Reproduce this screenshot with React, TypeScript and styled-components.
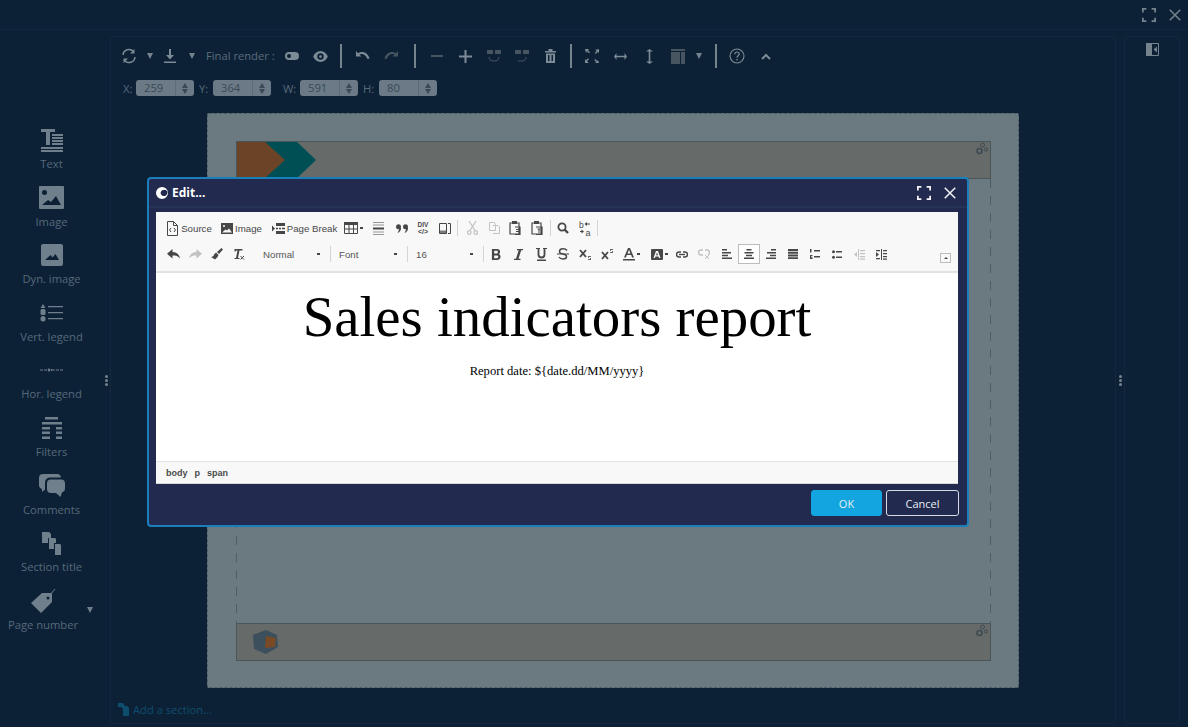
import React from "react";
import styled, { createGlobalStyle } from "styled-components";

const GlobalStyle = createGlobalStyle`
  html, body { margin: 0; padding: 0; height: 100%; background: #0d2136; overflow: hidden; }
  body { font-family: "Open Sans", "Noto Sans", sans-serif; }
  #root { height: 100%; }
`;

const Shell = styled.div`
  position: relative;
  display: flex;
  flex-direction: column;
  width: 1188px;
  height: 727px;
  background: #0d2136;
  color: #6f7f8b;
`;

const TopBar = styled.div`
  height: 29px;
  flex: none;
  display: flex;
  justify-content: flex-end;
  align-items: center;
  gap: 12px;
  padding-right: 6px;
  border-bottom: 1px solid #13283e;
`;

const TopIcon = styled.div`
  width: 14px;
  height: 14px;
  color: #75838e;
  display: flex;
`;

const Body = styled.div`
  flex: 1;
  display: flex;
  padding: 6px 8px 3px 0;
  min-height: 0;
`;

const Sidebar = styled.div`
  width: 103px;
  flex: none;
  padding-top: 89px;
`;

const PaletteItem = styled.div<{ $shift?: number }>`
  height: 57.6px;
  position: relative;
  display: flex;
  flex-direction: column;
  align-items: center;
  padding-right: ${(p) => p.$shift ?? 0}px;
  color: #6f7f8b;
`;

const PaletteIcon = styled.div`
  height: 30px;
  display: flex;
  align-items: center;
  justify-content: center;
`;

const PaletteLabel = styled.div`
  font-size: 11.2px;
  line-height: 18px;
  color: #55697a;
  white-space: nowrap;
`;

const PaletteCaret = styled.span`
  position: absolute;
  left: 87px;
  top: 21px;
  width: 0;
  height: 0;
  border-left: 3.5px solid transparent;
  border-right: 3.5px solid transparent;
  border-top: 6px solid #6f7f8b;
`;

const Splitter = styled.div`
  width: 7px;
  flex: none;
  display: flex;
  flex-direction: column;
  align-items: center;
  justify-content: center;
  gap: 1px;
  i {
    width: 3px;
    height: 3px;
    border-radius: 50%;
    background: #75838e;
  }
`;

const GutterSplitter = styled(Splitter)`
  width: 8px;
`;

const MainPanel = styled.div`
  width: 1006px;
  flex: none;
  border: 1px solid #13283e;
  border-radius: 4px;
  box-sizing: border-box;
  display: flex;
  flex-direction: column;
`;

const RightPanel = styled.div`
  width: 56px;
  flex: none;
  border: 1px solid #13283e;
  border-radius: 4px;
  box-sizing: border-box;
  display: flex;
  justify-content: center;
  padding-top: 6px;
  color: #75838e;
`;

const ToolRow = styled.div`
  display: flex;
  align-items: center;
  height: 24px;
  margin-top: 7px;
  padding-left: 4px;
`;

const ToolButton = styled.div<{ $off?: boolean }>`
  width: 28.5px;
  height: 24px;
  flex: none;
  display: flex;
  align-items: center;
  justify-content: center;
  color: ${(p) => (p.$off ? "#46555f" : "#7c8b95")};
`;

const ToolCaret = styled.div<{ $w: number }>`
  width: ${(p) => p.$w}px;
  flex: none;
  display: flex;
  justify-content: center;
  &::before {
    content: "";
    border-left: 3.5px solid transparent;
    border-right: 3.5px solid transparent;
    border-top: 6px solid #74838e;
  }
`;

const RenderLabel = styled.span`
  font-size: 11.2px;
  margin: 0 3px 2px 6px;
  color: #5a6c7b;
  white-space: nowrap;
`;

const ToolSep = styled.div<{ $before?: number; $after?: number }>`
  width: 2px;
  height: 24px;
  flex: none;
  background: #75838d;
  margin: 0 ${(p) => p.$after ?? 7}px 0 ${(p) => p.$before ?? 5}px;
`;

const GeometryRow = styled.div`
  display: flex;
  align-items: center;
  height: 16px;
  margin-top: 12px;
  padding-left: 12px;
  font-size: 11.2px;
  color: #55697a;
`;

const GeoLabel = styled.span<{ $w: number; $pad?: number }>`
  width: ${(p) => p.$w}px;
  box-sizing: border-box;
  padding-left: ${(p) => p.$pad ?? 0}px;
  flex: none;
`;

const GeoField = styled.div`
  width: 58px;
  height: 16px;
  flex: none;
  display: flex;
  background: #6b7a86;
  border-radius: 3px;
  color: #3a4956;
  font-size: 11.2px;
  line-height: 16px;
  span {
    flex: 1;
    padding-left: 8px;
  }
`;

const Spin = styled.div`
  width: 18px;
  display: flex;
  flex-direction: column;
  align-items: center;
  justify-content: center;
  gap: 1px;
  border-left: 1px solid #5d6b77;
  &::before,
  &::after {
    content: "";
    border-left: 3.5px solid transparent;
    border-right: 3.5px solid transparent;
  }
  &::before {
    border-bottom: 5px solid #3a4956;
  }
  &::after {
    border-top: 5px solid #3a4956;
  }
`;

const Canvas = styled.div`
  flex: 1;
  padding: 17px 0 0 96px;
  min-height: 0;
`;

const Sheet = styled.div`
  width: 812px;
  height: 575px;
  box-sizing: border-box;
  background: #6a7a80;
  border: 1px dashed #4d5c66;
  border-radius: 2px;
  padding: 27px 27px 26px 28px;
  display: flex;
  flex-direction: column;
`;

const Band = styled.div`
  height: 38px;
  flex: none;
  background: #666a68;
  border: 1px solid #4a555a;
  box-sizing: border-box;
  position: relative;
  overflow: hidden;
  display: flex;
  align-items: center;
`;

const BandGears = styled.div`
  position: absolute;
  top: 0;
  right: 1px;
  color: #3d4a52;
  display: flex;
`;

const SheetMiddle = styled.div`
  flex: 1;
  background:
    repeating-linear-gradient(#4f5e66 0 9px, transparent 9px 17px) left / 1px 100% no-repeat,
    repeating-linear-gradient(#4f5e66 0 9px, transparent 9px 17px) right / 1px 100% no-repeat;
`;

const AddSection = styled.div`
  display: flex;
  align-items: center;
  gap: 4px;
  height: 18px;
  margin: 0 0 5px 7px;
  font-size: 11.2px;
  color: #0d4d6d;
`;

const Modal = styled.div`
  position: absolute;
  left: 147px;
  top: 177px;
  width: 822px;
  height: 350px;
  box-sizing: border-box;
  background: #222b4f;
  border: 2px solid #1a7fb8;
  border-radius: 4px;
  display: flex;
  flex-direction: column;
`;

const ModalHead = styled.div`
  height: 27px;
  flex: none;
  display: flex;
  align-items: center;
  gap: 4px;
  padding: 0 10px 0 7px;
  border-bottom: 2px solid #283358;
  color: #fff;
  font-size: 12px;
  font-weight: 700;
`;

const ModalTitle = styled.span`
  flex: 1;
`;

const HeadIcon = styled.div`
  display: flex;
  margin-left: 8px;
  color: #f2f4f8;
`;

const Editor = styled.div`
  margin: 4px 9px 0 7px;
  height: 271px;
  flex: none;
  display: flex;
  flex-direction: column;
  background: #fff;
  border-bottom: 1px solid #d8d8d8;
`;

const EditorToolbar = styled.div`
  flex: none;
  position: relative;
  background: #f8f8f8;
  border-bottom: 2px solid #e2e2e2;
  padding: 3px 0 0 6px;
  height: 56px;
`;

const EditorRow = styled.div`
  display: flex;
  align-items: center;
  height: 26px;
  color: #4a4a4a;
  font-family: "Liberation Sans", Arial, sans-serif;
  font-size: 9.7px;
`;

const CkButton = styled.div<{ $w?: number; $off?: boolean; $on?: boolean }>`
  width: ${(p) => p.$w ?? 22}px;
  height: 20px;
  flex: none;
  box-sizing: border-box;
  display: flex;
  align-items: center;
  justify-content: center;
  gap: 2px;
  white-space: nowrap;
  color: #474747;
  opacity: ${(p) => (p.$off ? 0.3 : 1)};
  background: ${(p) => (p.$on ? "#fff" : "transparent")};
  border: ${(p) => (p.$on ? "1px solid #bcbcbc" : "none")};
`;

const CkCaret = styled.span`
  width: 3px;
  height: 1.5px;
  background: #474747;
  flex: none;
`;

const CkSep = styled.div<{ $gap?: number }>`
  width: 1px;
  height: 16px;
  flex: none;
  background: #d4d4d4;
  margin: 0 ${(p) => p.$gap ?? 0}px;
`;

const CkCombo = styled.div<{ $w: number; $pad: number }>`
  width: ${(p) => p.$w}px;
  flex: none;
  box-sizing: border-box;
  padding: 0 10px 0 ${(p) => p.$pad}px;
  display: flex;
  justify-content: space-between;
  align-items: center;
  color: #555;
`;

const Collapse = styled.div`
  position: absolute;
  right: 7px;
  bottom: 8px;
  width: 11px;
  height: 10px;
  box-sizing: border-box;
  border: 1px solid #bcbcbc;
  display: flex;
  align-items: center;
  justify-content: center;
  &::before {
    content: "";
    border-left: 2px solid transparent;
    border-right: 2px solid transparent;
    border-bottom: 2px solid #474747;
  }
`;

const Content = styled.div`
  flex: 1;
  background: #fff;
  color: #000;
  text-align: center;
  font-family: "Liberation Serif", "Times New Roman", serif;
  min-height: 0;
`;

const DocTitle = styled.h1`
  margin: 12px 0 0;
  font-size: 56.9px;
  line-height: 64px;
  font-weight: 400;
`;

const DocLine = styled.p`
  margin: 14px 0 0;
  font-size: 12.6px;
  line-height: 16px;
`;

const PathBar = styled.div`
  height: 21px;
  flex: none;
  display: flex;
  align-items: center;
  gap: 7px;
  padding-left: 10px;
  background: #f8f8f8;
  border-top: 1px solid #e2e2e2;
  font-family: "Liberation Sans", Arial, sans-serif;
  font-size: 9px;
  font-weight: 700;
  color: #4a4a4a;
`;

const ModalFoot = styled.div`
  flex: 1;
  display: flex;
  justify-content: flex-end;
  gap: 4px;
  padding: 6px 8px 0 0;
`;

const DialogButton = styled.button<{ $primary?: boolean }>`
  height: 26px;
  width: ${(p) => (p.$primary ? 71 : 73)}px;
  box-sizing: border-box;
  border-radius: 3px;
  border: 1px solid ${(p) => (p.$primary ? "#12a5e0" : "#d7dae2")};
  background: ${(p) => (p.$primary ? "#12a5e0" : "transparent")};
  color: #e8edf2;
  font-family: inherit;
  font-size: 11px;
  padding: 0;
`;

const S = ({ w = 16, h = 16, box = "0 0 16 16", children }: { w?: number; h?: number; box?: string; children: React.ReactNode }) => (
  <svg width={w} height={h} viewBox={box} fill="currentColor" stroke="none">
    {children}
  </svg>
);

const Line = (d: string, sw = 1.5) => <path d={d} fill="none" stroke="currentColor" strokeWidth={sw} />;

const FullscreenIcon = ({ size = 16 }: { size?: number }) => (
  <S w={size} h={size}>{Line("M1 5V1h4M11 1h4v4M15 11v4h-4M5 15H1v-4", 2)}</S>
);
const CloseIcon = ({ size = 16 }: { size?: number }) => (
  <S w={size} h={size}>{Line("M2 2l12 12M14 2L2 14", 1.7)}</S>
);

const Gears = () => (
  <S w={13} h={14} box="0 0 13 14">
    <g fill="none" stroke="currentColor">
      <circle cx="6.5" cy="3" r="2" />
      <circle cx="3.5" cy="9" r="2.5" strokeWidth="1.6" />
      <circle cx="10" cy="7.5" r="1.6" />
    </g>
  </S>
);

const palette: { label: string; icon: React.ReactNode; shift?: number; caret?: boolean }[] = [
  {
    label: "Text",
    icon: (
      <S w={24} h={24} box="0 0 24 24">
        <path d="M1 1h14v3H10v13H6V4H1z" />
        <path d="M12 6h11v2H12zM12 9h11v2H12zM12 12h11v2H12zM12 15h11v2H12zM1 19h22v2H1zM1 22h22v2H1z" />
      </S>
    ),
  },
  {
    label: "Image",
    icon: (
      <S w={25} h={23} box="0 0 25 23">
        <path fillRule="evenodd" d="M1 0h23a1 1 0 011 1v21a1 1 0 01-1 1H1a1 1 0 01-1-1V1a1 1 0 011-1zM8 6.500a2.500 2.500 0 10-5 0 2.500 2.500 0 005 0zM3 19h19l-5-9-5 6-3-2z" />
      </S>
    ),
  },
  {
    label: "Dyn. image",
    icon: (
      <S w={22} h={22} box="0 0 22 22">
        <path fillRule="evenodd" d="M2 0h18a2 2 0 012 2v18a2 2 0 01-2 2H2a2 2 0 01-2-2V2a2 2 0 012-2zM4 16h14l-3.500-6-3 3.500-2-2.500z" />
      </S>
    ),
  },
  {
    label: "Vert. legend",
    icon: (
      <S w={23} h={18} box="0 0 23 18">
        <path d="M3 0l2.500 4h-5z" />
        <rect x="0.500" y="5" width="5" height="6" rx="1.500" />
        <rect x="0.500" y="12" width="5" height="5.500" rx="2.500" />
        <path d="M8 2h15v1.200H8zM8 8h15v1.200H8zM8 14h15v1.200H8z" />
      </S>
    ),
  },
  {
    label: "Hor. legend",
    icon: (
      <S w={23} h={6} box="0 0 23 6">
        <path d="M0 2.500h3v1H0zM4 2.500h3v1H4zM12 2.500h3v1h-3zM20 2.500h3v1h-3zM16 2.500h3v1h-3z" />
        <path d="M9 1l1.500 2L9 5 7.500 3zM11 2h1v2h-1z" />
      </S>
    ),
  },
  {
    label: "Filters",
    icon: (
      <S w={20} h={22} box="0 0 20 22">
        <path d="M3 0h13v2.500H3zM0 5h20v2.500H0zM0 10h8v2.500H0zM14 10h6v2.500h-6zM0 14.500h8V17H0zM14 14.500h6V17h-6zM0 19.500h8V22H0zM14 19.500h6V22h-6z" />
      </S>
    ),
  },
  {
    label: "Comments",
    icon: (
      <S w={26} h={24} box="0 0 26 24">
        <path d="M4 0h14a4 4 0 014 3.500H11a5 5 0 00-5 5V15.500L3 18v-3A4 4 0 010 12V4a4 4 0 014-4z" />
        <path d="M12 5.500h10a4 4 0 014 4v5a4 4 0 01-3 3.800L21.500 23 17 19h-5a4 4 0 01-4-4V9.500a4 4 0 014-4z" />
      </S>
    ),
  },
  {
    label: "Section title",
    icon: (
      <S w={19} h={23} box="0 0 19 23">
        <path d="M0 0h7l2 2v4H6v5H0zM7 6h6l1 1v4h-2v6H7zM13 12h5l1 1v10h-6z" />
      </S>
    ),
  },
  {
    label: "Page number",
    shift: 17,
    caret: true,
    icon: (
      <S w={25} h={25} box="0 0 25 25">
        <path fillRule="evenodd" d="M11 5h10v9L10 25 0 15zM17 8.500a1.500 1.500 0 100 3 1.500 1.500 0 000-3z" />
        <path d="M19 7l5-6" fill="none" stroke="currentColor" />
      </S>
    ),
  },
];

const ck: Record<string, React.ReactNode> = {
  source: (
    <S w={13} h={15} box="0 0 13 15">
      {Line("M1.500.5h6l4 4v10h-10zM7.500.5v4h4", 1)}
      {Line("M5 7L3.500 9 5 11M8 7l1.500 2L8 11", 1)}
    </S>
  ),
  image: (
    <S w={12} h={11} box="0 0 12 11">
      <path fillRule="evenodd" d="M0 0h12v11H0zM3 2a1 1 0 100 2 1 1 0 000-2zM1 9.500h10l-3-4-2 2-1.500-1z" />
    </S>
  ),
  pagebreak: (
    <S w={13} h={11} box="0 0 13 11">
      <path d="M0 2.500L3 5.500 0 8.500zM4 0h9v3H4zM4 4.800h2v1.400H4zM7 4.800h2v1.400H7zM10 4.800h3v1.400h-3zM4 8h9v3H4z" />
    </S>
  ),
  table: (
    <S w={14} h={12} box="0 0 14 12">
      <path d="M0 0h14v3H0z" />
      {Line("M.5.5h13v11H.5zM.5 7h13M5 .5v11M9.500.5v11", 1)}
    </S>
  ),
  hline: (
    <S w={11} h={13} box="0 0 11 13">
      <path d="M0 5.500h11v2H0z" />
      <path d="M0 0h11v1H0zM0 2.500h11v1H0zM0 9.500h11v1H0zM0 12h11v1H0z" opacity=".55" />
    </S>
  ),
  quote: (
    <S w={12} h={9} box="0 0 12 9">
      <circle cx="2.500" cy="2.800" r="2.500" />
      <circle cx="9.500" cy="2.800" r="2.500" />
      <path d="M3 4h2C5 6.500 4 8 1.500 9 2.500 7.500 3 6 3 4zM10 4h2c0 2.500-1 4-3.500 5C9.500 7.500 10 6 10 4z" />
    </S>
  ),
  div: (
    <svg width="12" height="14" viewBox="0 0 12 14" fill="currentColor">
      <text x="6" y="6" textAnchor="middle" fontSize="6.500" fontWeight="700" fontFamily="Liberation Sans">DIV</text>
      <text x="6" y="13" textAnchor="middle" fontSize="7" fontWeight="700" fontFamily="Liberation Sans">{"</>"}</text>
    </svg>
  ),
  preview: (
    <S w={12} h={13} box="0 0 12 13">
      {Line("M.5 1.500h7v10h-7zM9 1.500h2.500v10H9", 1)}
      <path d="M1 8.500h6v2.500H1z" opacity=".7" />
    </S>
  ),
  cut: (
    <S w={11} h={14} box="0 0 11 14">
      {Line("M2 0l6 9.500M9 0L3 9.500", 1.2)}
      <g fill="none" stroke="currentColor" strokeWidth="1.200">
        <circle cx="2.300" cy="11.500" r="1.800" />
        <circle cx="8.700" cy="11.500" r="1.800" />
      </g>
    </S>
  ),
  copy: (
    <S w={11} h={12} box="0 0 11 12">
      {Line("M.5.5h5l1 2v6h-6zM4 3.500h5l1.500 1.500v6.500H4", 1)}
    </S>
  ),
  paste: (
    <S w={12} h={14} box="0 0 12 14">
      {Line("M1 2h9v11H1zM6 6h5v7.500H6", 1.200)}
      <path d="M3 0h5v3H3zM7 8h3v1H7zM7 10h3v1H7z" />
    </S>
  ),
  pastetext: (
    <S w={12} h={14} box="0 0 12 14">
      {Line("M1 2h9v11H1zM5 6h6v7.500H5", 1.200)}
      <path d="M3 0h5v3H3zM6.500 7.500h3v1H8.500v3.500h-1V8.500h-1z" />
    </S>
  ),
  find: (
    <S w={12} h={12} box="0 0 12 12">
      <circle cx="5" cy="5" r="3.600" fill="none" stroke="currentColor" strokeWidth="1.800" />
      {Line("M7.500 7.500L11 11", 2.400)}
    </S>
  ),
  replace: (
    <svg width="13" height="15" viewBox="0 0 13 15" fill="currentColor">
      <text x="0" y="6.500" fontSize="8.500" fontFamily="Liberation Sans">b</text>
      <text x="6.500" y="14.500" fontSize="9" fontFamily="Liberation Sans">a</text>
      <path d="M5.500 3L8 1v1.500h3v1H8V5zM5 10.500L2.500 12.500V11H1v-1h1.500V8.500z" />
    </svg>
  ),
  undo: (
    <S w={13} h={10} box="0 0 13 10">
      <path d="M5.500 0v3C9.500 3 12 5 13 9.500 11 7 9 6.500 5.500 6.500v3L0 4.800z" />
    </S>
  ),
  redo: (
    <S w={13} h={10} box="0 0 13 10">
      <path d="M7.500 0v3C3.500 3 1 5 0 9.500 2 7 4 6.500 7.500 6.500v3L13 4.800z" />
    </S>
  ),
  brush: (
    <S w={12} h={12} box="0 0 12 12">
      <path d="M10.500 0L12 1.500 8 6 6 4zM5 4.500L7.500 7 6.500 9 4 11.500 0 9c1.500 0 3-1 3-2.500z" />
    </S>
  ),
  clear: (
    <svg width="12" height="12" viewBox="0 0 12 12" fill="currentColor">
      <path d="M1.500 1h8v1.500H6.500L5 10H6.500v1H1.500v-1H3L4.500 2.500H3L2.500 3.500h-1z" />
      <path d="M7.500 8l3.500 3.500M11 8l-3.500 3.500" stroke="currentColor" strokeWidth="1" />
    </svg>
  ),
  bold: (
    <svg width="10" height="11" viewBox="0 0 11 12" fill="currentColor">
      <path fillRule="evenodd" d="M1 0h5.500C9 0 10 1.300 10 3c0 1.200-.6 2-1.500 2.500C9.800 6 10.500 7 10.500 8.500 10.500 10.700 9 12 6.500 12H1zM3.500 2v3h2.500c1 0 1.500-.6 1.500-1.500S7 2 6 2zM3.500 7v3h3C7.500 10 8 9.400 8 8.500S7.500 7 6.500 7z" />
    </svg>
  ),
  italic: (
    <S w={9} h={11} box="0 0 9 11">
      <path d="M3 0h6v1.300H7.200L4.500 9.700H6.500V11H0V9.700h2L4.700 1.300H3z" />
    </S>
  ),
  underline: (
    <S w={11} h={13} box="0 0 11 13">
      {Line("M2.500.5v6c0 2 1 3 3 3s3-1 3-3v-6", 1.800)}
      <path d="M0 0h4v1H0zM7 0h4v1H7zM1 11.500h9V13H1z" />
    </S>
  ),
  strike: (
    <S w={12} h={12} box="0 0 12 12">
      {Line("M10 2.500C9 1 8 .8 6 .8 3.500.8 2.500 2 2.500 3.500c0 1.500 1 2.200 3.500 2.500 2.500.4 3.500 1 3.500 2.500S8.500 11 6 11c-2 0-3.200-.5-4-2", 1.500)}
      <path d="M0 5.500h12v1H0z" />
    </S>
  ),
  sub: (
    <S w={12} h={11} box="0 0 12 11">
      {Line("M1 1l6 7M7 1L1 8", 1.800)}
      <path d="M9 7h3v1h-2v1h2v2H9v-1h2V9H9z" opacity=".8" />
    </S>
  ),
  sup: (
    <S w={12} h={11} box="0 0 12 11">
      {Line("M1 3l6 7M7 3L1 10", 1.800)}
      <path d="M9 0h3v1h-2v1h2v2H9V3h2V2H9z" opacity=".8" />
    </S>
  ),
  textcolor: (
    <svg width="12" height="13" viewBox="0 0 12 13" fill="currentColor">
      <path fillRule="evenodd" d="M5 0h2l4 9.500H9L8.200 7H3.800L3 9.500H1zM4.500 5.500h3L6 1.800z" />
      <path d="M0 11h12v1.500H0z" />
    </svg>
  ),
  bgcolor: (
    <S w={12} h={11} box="0 0 12 11">
      <path fillRule="evenodd" d="M1 0h10a1 1 0 011 1v9a1 1 0 01-1 1H1a1 1 0 01-1-1V1a1 1 0 011-1zM5 2L2.500 9H4l.5-1.500h3L8 9h1.500L7 2zM5 6.300L6 3.500l1 2.800z" />
    </S>
  ),
  link: (
    <S w={12} h={7} box="0 0 12 7">
      {Line("M5 1H3a2.500 2.500 0 000 5h2M7 1h2a2.500 2.500 0 010 5H7", 1.500)}
      <path d="M3 2.800h6v1.400H3z" />
    </S>
  ),
  unlink: (
    <S w={12} h={10} box="0 0 12 10">
      {Line("M5 1H3a2.500 2.500 0 000 5h2M7 1h2a2.500 2.500 0 011 4.800", 1.500)}
      {Line("M7 6l4 4M11 6l-4 4", 1)}
    </S>
  ),
  left: (
    <S w={10} h={10} box="0 0 10 10">
      <path d="M0 0h5v1.500H0zM0 3h9v1.500H0zM0 5.800h6v1.500H0zM0 8.500h10V10H0z" />
    </S>
  ),
  center: (
    <S w={10} h={10} box="0 0 10 10">
      <path d="M2.500 0h5v1.500h-5zM.5 3h9v1.500h-9zM2 5.800h6v1.500H2zM0 8.500h10V10H0z" />
    </S>
  ),
  right: (
    <S w={10} h={10} box="0 0 10 10">
      <path d="M5 0h5v1.500H5zM1 3h9v1.500H1zM4 5.800h6v1.500H4zM0 8.500h10V10H0z" />
    </S>
  ),
  justify: (
    <S w={10} h={10} box="0 0 10 10">
      <path d="M0 0h10v2H0zM0 2.800h10v2H0zM0 5.600h10v1.800H0zM0 8.300h10V10H0z" />
    </S>
  ),
  ol: (
    <S w={10} h={10} box="0 0 10 10">
      <path d="M4 1h6v1.500H4zM4 7h6v1.500H4zM0 0h1.500v3.500H0zM0 6h2.500v1H1v.7h1.500v1H1v.3h1.500v1H0z" />
    </S>
  ),
  ul: (
    <S w={10} h={9} box="0 0 10 9">
      <path d="M4 1h6v1.500H4zM4 6.500h6V8H4z" />
      <circle cx="1.500" cy="1.800" r="1.500" />
      <circle cx="1.500" cy="7.200" r="1.500" />
    </S>
  ),
  outdent: (
    <S w={11} h={11} box="0 0 11 11">
      <path d="M0 5.500L3 3v5zM4 0h1v11H4zM6 1h5v1.200H6zM6 4h5v1.200H6zM6 7h5v1.200H6zM6 9.500h5v1.200H6z" />
    </S>
  ),
  indent: (
    <S w={11} h={11} box="0 0 11 11">
      <path d="M3 5.500L0 3v5zM5 0h1v11H5zM7 1h4v1.200H7zM7 4h4v1.200H7zM7 7h4v1.200H7zM7 9.500h4v1.200H7zM0 1h4v1.200H0zM0 9h4v1.200H0z" />
    </S>
  ),
};

const Geo = ({ value }: { value: string }) => (
  <GeoField>
    <span>{value}</span>
    <Spin />
  </GeoField>
);

export default function App() {
  return (
    <Shell>
      <GlobalStyle />
      <TopBar>
        <TopIcon>
          <FullscreenIcon size={14} />
        </TopIcon>
        <TopIcon>
          <CloseIcon size={14} />
        </TopIcon>
      </TopBar>
      <Body>
        <Sidebar>
          {palette.map((item) => (
            <PaletteItem key={item.label} $shift={item.shift}>
              <PaletteIcon>{item.icon}</PaletteIcon>
              <PaletteLabel>{item.label}</PaletteLabel>
              {item.caret && <PaletteCaret />}
            </PaletteItem>
          ))}
        </Sidebar>
        <Splitter>
          <i />
          <i />
          <i />
        </Splitter>
        <MainPanel>
          <ToolRow>
            <ToolButton>
              <S>
                {Line("M2 7a6 6 0 0110.500-3.500M14 9a6 6 0 01-10.500 3.500", 1.500)}
                <path d="M13.500 1v4.500H9zM2.500 15v-4.500H7z" />
              </S>
            </ToolButton>
            <ToolCaret $w={12} />
            <ToolButton>
              <S w={14} h={16} box="0 0 14 16">
                <path d="M6 1h2v6h3L7 11.500 3 7h3zM1 13.500h12V15H1z" />
              </S>
            </ToolButton>
            <ToolCaret $w={16} />
            <RenderLabel>Final render :</RenderLabel>
            <ToolButton>
              <S w={16} h={10} box="0 0 16 10">
                <path fillRule="evenodd" d="M5 1h6a4 4 0 010 8H5a4 4 0 010-8zM5 3a2 2 0 100 4 2 2 0 000-4z" />
              </S>
            </ToolButton>
            <ToolButton>
              <S w={15} h={11} box="0 0 16 12">
                <path fillRule="evenodd" d="M8 0c3.500 0 6.500 2.500 8 6-1.500 3.500-4.500 6-8 6S1.500 9.500 0 6c1.500-3.500 4.500-6 8-6zM8 2.500a3.500 3.500 0 100 7 3.500 3.500 0 000-7zM8 4.500a1.500 1.500 0 110 3 1.500 1.500 0 010-3z" />
              </S>
            </ToolButton>
            <ToolSep />
            <ToolButton>
              <S w={15} h={10} box="0 0 15 10">
                <path d="M1 0v5.500h5.500L4.300 3.600C6 2.500 10 2.300 12.500 8l2-.6C12.500 1 7 -.3 3 2.200z" />
              </S>
            </ToolButton>
            <ToolButton $off>
              <S w={15} h={10} box="0 0 15 10">
                <path d="M14 0v5.500H8.500l2.200-1.900C9 2.500 5 2.300 2.500 8l-2-.6C2.500 1 8 -.3 12 2.200z" />
              </S>
            </ToolButton>
            <ToolSep $before={8} />
            <ToolButton $off>
              <S w={12} h={2} box="0 0 12 2">
                <path d="M0 0h12v2H0z" />
              </S>
            </ToolButton>
            <ToolButton>
              <S w={13} h={13} box="0 0 13 13">
                <path d="M5.500 0h2v5.500H13v2H7.500V13h-2V7.500H0v-2h5.500z" />
              </S>
            </ToolButton>
            <ToolButton $off>
              <S w={14} h={14} box="0 0 14 14">
                <path d="M0 1h6v4H0zM8 1h6v4H8z" />
                {Line("M2 8c0 3 2 4 5 4s5-1 5-4", 1)}
              </S>
            </ToolButton>
            <ToolButton $off>
              <S w={14} h={14} box="0 0 14 14">
                <path d="M0 1h6v4H0zM8 1h6v4H8z" />
                {Line("M11 8c0 2-1 4-4 4H3", 1)}
              </S>
            </ToolButton>
            <ToolButton>
              <S w={11} h={14} box="0 0 11 14">
                <path fillRule="evenodd" d="M0 2h3.500V0h4v2H11v1.500H0zM1 4.500h9V14H1zM3 6v6h1.500V6zM6.500 6v6H8V6z" />
              </S>
            </ToolButton>
            <ToolSep $after={6} />
            <ToolButton>
              <S w={14} h={14} box="0 0 14 14">
                <path d="M0 0h4L3 1.200l2 2-1 1-2-2L1 4zM14 0v4l-1.200-1-2 2-1-1 2-2L10 1zM0 14v-4l1 1.200 2-2 1 1-2 2L4 14zM14 14h-4l1.200-1-2-2 1-1 2 2 .8-1z" />
              </S>
            </ToolButton>
            <ToolButton>
              <S w={13} h={7} box="0 0 13 7">
                <path d="M0 3.500L2.500 0v2.700h8V0L13 3.500 10.500 7V4.300h-8V7z" />
              </S>
            </ToolButton>
            <ToolButton>
              <S w={7} h={15} box="0 0 7 15">
                <path d="M3.500 0L7 2.500H4.300v10H7L3.500 15 0 12.500h2.700v-10H0z" />
              </S>
            </ToolButton>
            <ToolButton $off>
              <S w={14} h={15} box="0 0 14 15">
                <path d="M0 0h14v2H0zM0 3h9v12H0zM10 3h4v12h-4z" />
              </S>
            </ToolButton>
            <ToolCaret $w={14} />
            <ToolSep $before={9} $after={6} />
            <ToolButton>
              <S>
                <circle cx="8" cy="8" r="7" fill="none" stroke="currentColor" strokeWidth="1.100" />
                {Line("M5.800 6.200C5.800 4.800 6.800 4 8 4s2.200.8 2.200 2c0 1.700-2.200 1.800-2.200 3.800", 1.200)}
                <rect x="7.300" y="11" width="1.400" height="1.400" />
              </S>
            </ToolButton>
            <ToolButton>
              <S w={10} h={7} box="0 0 10 7">
                {Line("M1 6l4-4 4 4", 2)}
              </S>
            </ToolButton>
          </ToolRow>
          <GeometryRow>
            <GeoLabel $w={13}>X:</GeoLabel>
            <Geo value="259" />
            <GeoLabel $w={19} $pad={5}>Y:</GeoLabel>
            <Geo value="364" />
            <GeoLabel $w={29} $pad={12}>W:</GeoLabel>
            <Geo value="591" />
            <GeoLabel $w={21} $pad={5}>H:</GeoLabel>
            <Geo value="80" />
          </GeometryRow>
          <Canvas>
            <Sheet>
              <Band>
                <svg width="82" height="38" viewBox="0 0 82 38">
                  <path d="M0 0h28l21 19-21 19H0z" fill="#6b4428" />
                  <path d="M27 0h32l20 19-20 19H27l21-19z" fill="#004f55" />
                </svg>
                <BandGears>
                  <Gears />
                </BandGears>
              </Band>
              <SheetMiddle />
              <Band>
                <svg width="46" height="26" viewBox="0 0 46 26">
                  <path d="M16 6l13-5 11 5 1 12-12 7-12-5z" fill="#3c4f5c" />
                  <path d="M29 7l10 2-1 9-10 1z" fill="#7a4a26" />
                </svg>
                <BandGears>
                  <Gears />
                </BandGears>
              </Band>
            </Sheet>
          </Canvas>
          <AddSection>
            <S w={11} h={13} box="0 0 11 13">
              <path d="M0 0h5l2 3h2l2 2v8H5V6L3 4H0z" />
            </S>
            Add a section...
          </AddSection>
        </MainPanel>
        <GutterSplitter>
          <i />
          <i />
          <i />
        </GutterSplitter>
        <RightPanel>
          <S w={13} h={13} box="0 0 13 13">
            <path d="M0 0h6v13H0z" />
            {Line("M6 .5h6.500v12H6", 1)}
            <path d="M11 3.500v6L7.500 6.500z" />
          </S>
        </RightPanel>
      </Body>
      <Modal>
        <ModalHead>
          <S w={12} h={12} box="0 0 12 12">
            <path fillRule="evenodd" d="M6 0a6 6 0 110 12A6 6 0 016 0zM7 3a3 3 0 00-1 5.500A3.500 3.500 0 0011 4 4 4 0 007 3z" />
          </S>
          <ModalTitle>Edit...</ModalTitle>
          <HeadIcon>
            <FullscreenIcon size={14} />
          </HeadIcon>
          <HeadIcon>
            <CloseIcon size={14} />
          </HeadIcon>
        </ModalHead>
        <Editor>
          <EditorToolbar>
            <EditorRow>
              <CkButton $w={54}>{ck.source} Source</CkButton>
              <CkButton $w={51}>{ck.image} Image</CkButton>
              <CkButton $w={75}>{ck.pagebreak} Page Break</CkButton>
              <CkButton $w={23}>{ck.table}<CkCaret /></CkButton>
              <CkButton $w={27}>{ck.hline}</CkButton>
              <CkButton $w={19}>{ck.quote}</CkButton>
              <CkButton $w={24}>{ck.div}</CkButton>
              <CkButton $w={20}>{ck.preview}</CkButton>
              <CkSep $gap={2} />
              <CkButton $w={24} $off>{ck.cut}</CkButton>
              <CkButton $w={20} $off>{ck.copy}</CkButton>
              <CkButton>{ck.paste}</CkButton>
              <CkButton>{ck.pastetext}</CkButton>
              <CkSep $gap={2} />
              <CkButton $w={20}>{ck.find}</CkButton>
              <CkButton $w={24}>{ck.replace}</CkButton>
              <CkSep />
            </EditorRow>
            <EditorRow>
              <CkButton>{ck.undo}</CkButton>
              <CkButton $off>{ck.redo}</CkButton>
              <CkButton>{ck.brush}</CkButton>
              <CkButton>{ck.clear}</CkButton>
              <CkCombo $w={80} $pad={13}>Normal<CkCaret /></CkCombo>
              <CkSep />
              <CkCombo $w={76} $pad={8}>Font<CkCaret /></CkCombo>
              <CkSep />
              <CkCombo $w={75} $pad={8}>16<CkCaret /></CkCombo>
              <CkSep />
              <CkButton $w={24}>{ck.bold}</CkButton>
              <CkButton $w={20}>{ck.italic}</CkButton>
              <CkButton $w={26}>{ck.underline}</CkButton>
              <CkButton $w={18}>{ck.strike}</CkButton>
              <CkButton $w={26}>{ck.sub}</CkButton>
              <CkButton $w={18}>{ck.sup}</CkButton>
              <CkButton $w={31}>{ck.textcolor}<CkCaret /></CkButton>
              <CkButton $w={24}>{ck.bgcolor}<CkCaret /></CkButton>
              <CkButton $w={21}>{ck.link}</CkButton>
              <CkButton $w={24} $off>{ck.unlink}</CkButton>
              <CkButton>{ck.left}</CkButton>
              <CkButton $on>{ck.center}</CkButton>
              <CkButton>{ck.right}</CkButton>
              <CkButton>{ck.justify}</CkButton>
              <CkButton>{ck.ol}</CkButton>
              <CkButton>{ck.ul}</CkButton>
              <CkButton $off>{ck.outdent}</CkButton>
              <CkButton>{ck.indent}</CkButton>
            </EditorRow>
            <Collapse />
          </EditorToolbar>
          <Content>
            <DocTitle>Sales indicators report</DocTitle>
            <DocLine>Report date: {"${date.dd/MM/yyyy}"}</DocLine>
          </Content>
          <PathBar>
            <span>body</span>
            <span>p</span>
            <span>span</span>
          </PathBar>
        </Editor>
        <ModalFoot>
          <DialogButton $primary>OK</DialogButton>
          <DialogButton>Cancel</DialogButton>
        </ModalFoot>
      </Modal>
    </Shell>
  );
}
